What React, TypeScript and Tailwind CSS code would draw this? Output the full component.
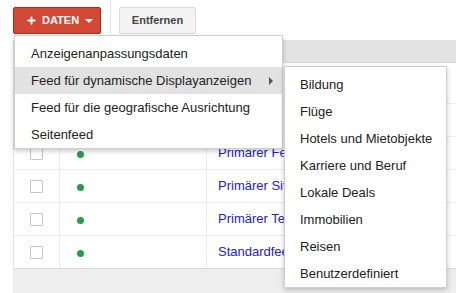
import { Plus } from "lucide-react";

const menuItems = [
  "Anzeigenanpassungsdaten",
  "Feed für dynamische Displayanzeigen",
  "Feed für die geografische Ausrichtung",
  "Seitenfeed",
];

const subItems = [
  "Bildung",
  "Flüge",
  "Hotels und Mietobjekte",
  "Karriere und Beruf",
  "Lokale Deals",
  "Immobilien",
  "Reisen",
  "Benutzerdefiniert",
];

const rows = ["", "", "Primärer Feed", "Primärer Sitelinks", "Primärer Telefon", "Standardfeed"];

export default function App() {
  return (
    <div
      className="relative w-[456px] h-[293px] overflow-hidden bg-white text-[13px] text-[#222]"
      style={{ fontFamily: '"Liberation Sans", Arial, sans-serif' }}
    >
      {/* Toolbar */}
      <div className="flex items-start h-[40px] pl-[13px] pt-[7px]">
        <button className="flex items-center gap-[5px] h-[27px] w-[88px] pl-[12px] rounded-[2px] border border-[#b0281a] bg-[#d14836] text-white text-[11px] font-bold">
          <Plus className="w-[11px] h-[11px]" strokeWidth={4} />
          <span>DATEN</span>
          <span className="ml-[1px] w-0 h-0 border-x-[4px] border-x-transparent border-t-[4px] border-t-white" />
        </button>
        <div className="ml-[9px] mt-[-7px] w-px h-[34px] bg-[#e5e5e5]" />
        <button className="ml-[8px] h-[27px] w-[77px] rounded-[2px] border border-[#dcdcdc] bg-[#f3f3f3] text-[#444] text-[11px] font-bold">
          Entfernen
        </button>
      </div>

      {/* Table */}
      <div className="ml-[13px] border-l border-[#e5e5e5]">
        <div className="h-[23px] bg-[#e3e3e3] border-b border-[#d6d6d6]" />
        {rows.map((name, i) => (
          <div
            key={i}
            className={`flex border-b ${i === 0 ? "h-[41px]" : "h-[33px]"} ${
              i === rows.length - 1 ? "border-[#d9d9d9]" : "border-[#ebebeb]"
            }`}
          >
            <div className="w-[46px] flex justify-center pt-[10px] border-r border-[#ebebeb]">
              <div className="w-[13px] h-[13px] border border-[#c6c6c6] rounded-[1px] bg-white" />
            </div>
            <div className="w-[147px] pl-[17px] pt-[14px] border-r border-[#ebebeb]">
              <div className="w-[7px] h-[7px] rounded-full bg-[#279c48]" />
            </div>
            <div className="flex-1 pl-[11px] pt-[6px]">
              <div className="w-[66px] overflow-hidden whitespace-nowrap text-[#2323c8]">{name}</div>
            </div>
          </div>
        ))}
      </div>
      <div className="absolute left-[13px] right-0 top-[269px] bottom-0 bg-[#eeeeee]" />

      {/* Main menu */}
      <div className="absolute left-[14px] top-[35px] w-[269px] pt-[4px] bg-white border border-[#cfcfcf] shadow-[0_2px_5px_rgba(0,0,0,0.22)]">
        {menuItems.map((item, i) => (
          <div
            key={item}
            className={`relative flex items-center h-[27px] pl-[16px] whitespace-nowrap ${i === 1 ? "bg-[#e2e2e2]" : ""}`}
          >
            {item}
            {i === 1 && (
              <span className="absolute right-[9px] top-[10px] w-0 h-0 border-y-[4px] border-y-transparent border-l-[4px] border-l-[#555]" />
            )}
          </div>
        ))}
      </div>

      {/* Submenu */}
      <div className="absolute left-[284px] top-[66px] w-[163px] pt-[4px] bg-white border border-[#cfcfcf] shadow-[0_2px_5px_rgba(0,0,0,0.22)]">
        {subItems.map((item) => (
          <div key={item} className="flex items-center h-[27px] pl-[15px] whitespace-nowrap">
            {item}
          </div>
        ))}
      </div>
    </div>
  );
}
